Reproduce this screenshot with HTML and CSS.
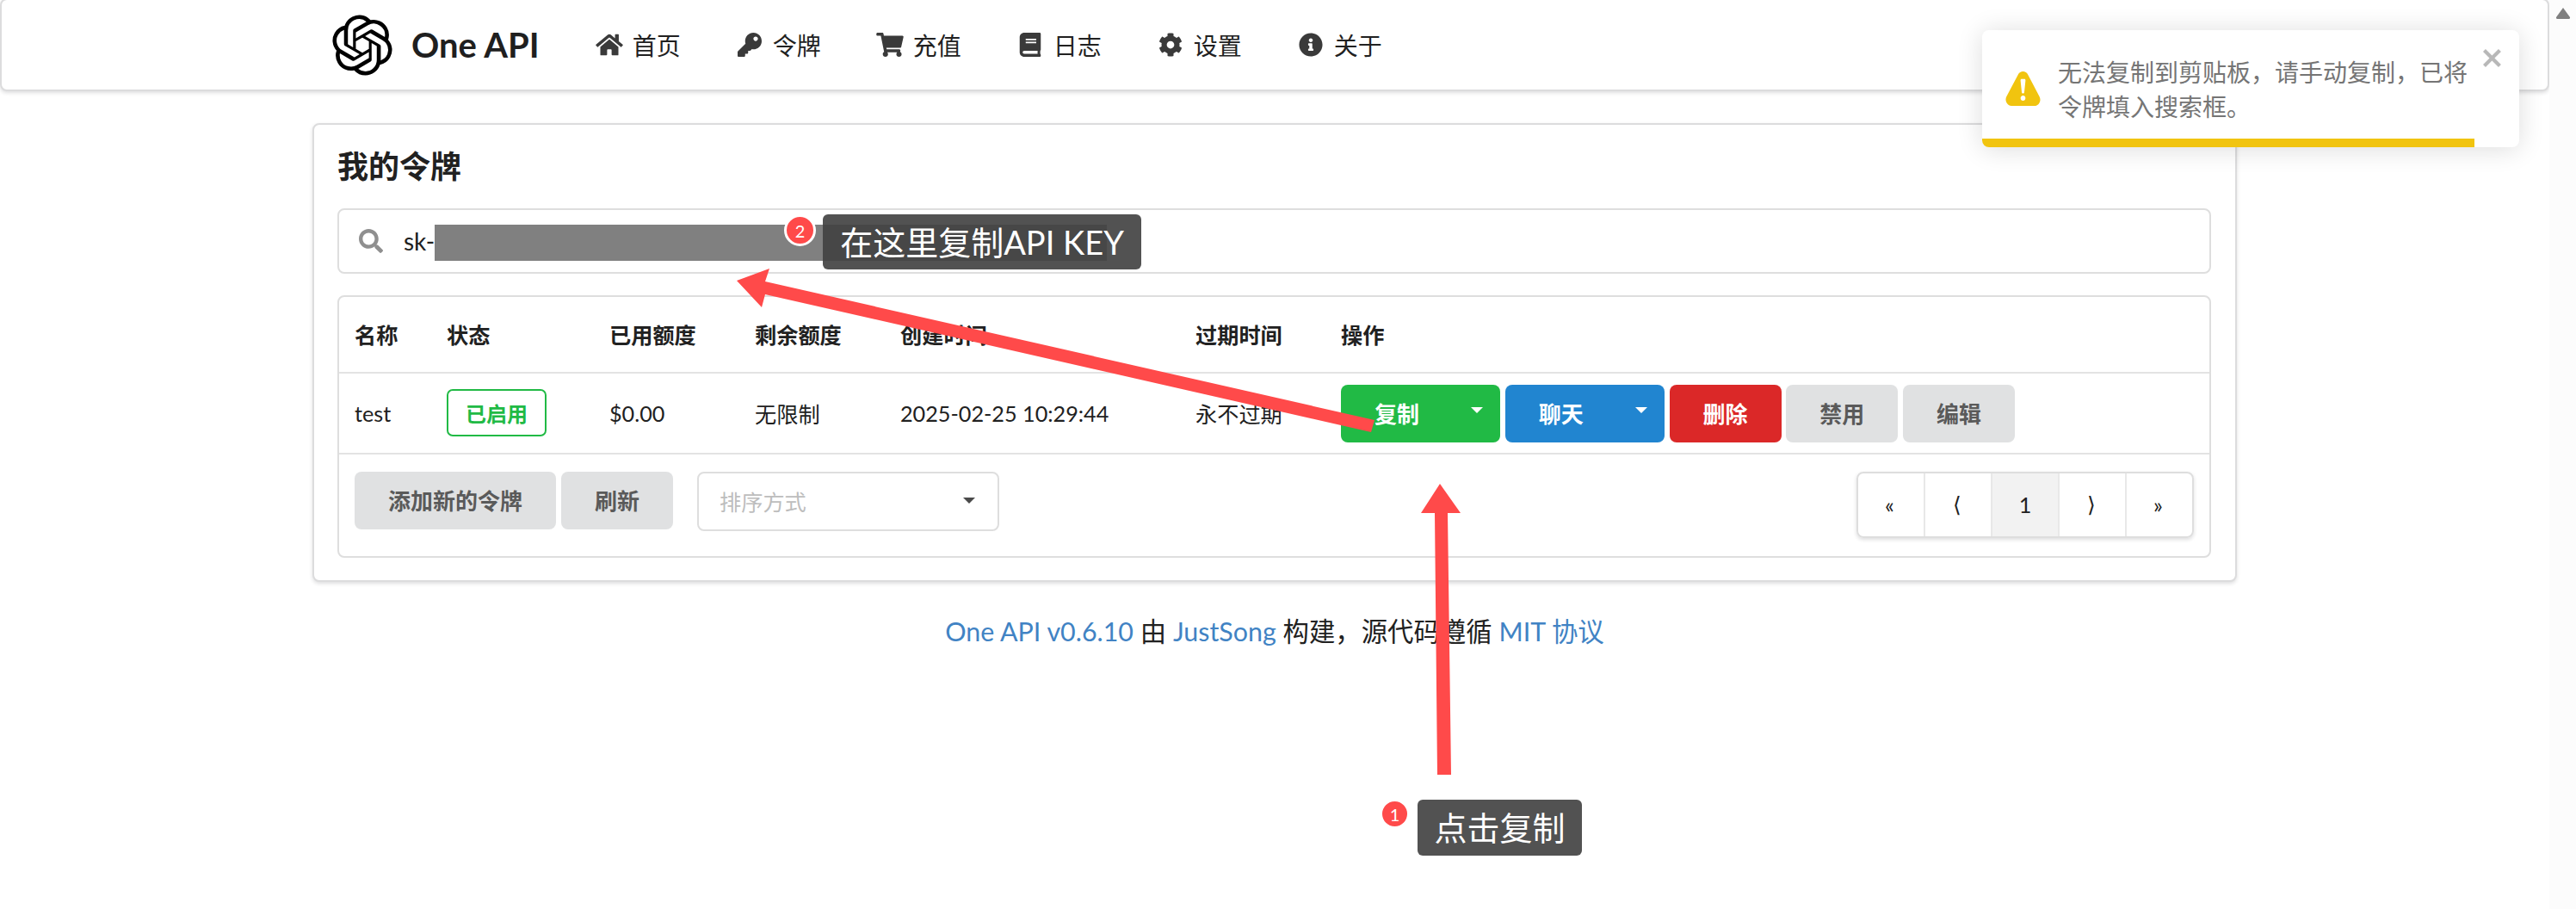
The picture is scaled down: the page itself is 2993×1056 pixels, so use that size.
FILE: index.html
```html
<!DOCTYPE html>
<html lang="zh">
<head>
<meta charset="utf-8">
<title>One API</title>
<link rel="stylesheet" href="styles.css">
</head>
<body>
<div class="page">
  <div class="content">
    <header class="navbar">
      <div class="nav-inner">
        <a class="brand">
          <svg class="logo" viewBox="0 0 24 24"><path d="M22.2819 9.8211a5.9847 5.9847 0 0 0-.5157-4.9108 6.0462 6.0462 0 0 0-6.5098-2.9A6.0651 6.0651 0 0 0 4.9807 4.1818a5.9847 5.9847 0 0 0-3.9977 2.9 6.0462 6.0462 0 0 0 .7427 7.0966 5.98 5.98 0 0 0 .511 4.9107 6.051 6.051 0 0 0 6.5146 2.9001A5.9847 5.9847 0 0 0 13.2599 24a6.0557 6.0557 0 0 0 5.7718-4.2058 5.9894 5.9894 0 0 0 3.9977-2.9001 6.0557 6.0557 0 0 0-.7475-7.0729zm-9.022 12.6081a4.4755 4.4755 0 0 1-2.8764-1.0408l.1419-.0804 4.7783-2.7582a.7948.7948 0 0 0 .3927-.6813v-6.7369l2.02 1.1686a.071.071 0 0 1 .038.052v5.5826a4.504 4.504 0 0 1-4.4945 4.4944zm-9.6607-4.1254a4.4708 4.4708 0 0 1-.5346-3.0137l.142.0852 4.783 2.7582a.7712.7712 0 0 0 .7806 0l5.8428-3.3685v2.3324a.0804.0804 0 0 1-.0332.0615L9.74 19.9502a4.4992 4.4992 0 0 1-6.1408-1.6464zM2.3408 7.8956a4.485 4.485 0 0 1 2.3655-1.9728V11.6a.7664.7664 0 0 0 .3879.6765l5.8144 3.3543-2.0201 1.1685a.0757.0757 0 0 1-.071 0l-4.8303-2.7865A4.504 4.504 0 0 1 2.3408 7.872zm16.5963 3.8558L13.1038 8.364 15.1192 7.2a.0757.0757 0 0 1 .071 0l4.8303 2.7913a4.4944 4.4944 0 0 1-.6765 8.1042v-5.6772a.79.79 0 0 0-.407-.667zm2.0107-3.0231l-.142-.0852-4.7735-2.7818a.7759.7759 0 0 0-.7854 0L9.409 9.2297V6.8974a.0662.0662 0 0 1 .0284-.0615l4.8303-2.7866a4.4992 4.4992 0 0 1 6.6802 4.66zM8.3065 12.863l-2.02-1.1638a.0804.0804 0 0 1-.038-.0567V6.0742a4.4992 4.4992 0 0 1 7.3757-3.4537l-.142.0805L8.704 5.459a.7948.7948 0 0 0-.3927.6813zm1.0976-2.3654l2.602-1.4998 2.6069 1.4998v2.9994l-2.5974 1.4997-2.6067-1.4997Z"/></svg>
          <span class="brand-name">One API</span>
        </a>
        <nav class="menu">
          <a class="menu-item"><svg class="nav-icon" viewBox="0 0 576 512"><path d="M280.37 148.26L96 300.11V464a16 16 0 0 0 16 16l112.06-.29a16 16 0 0 0 15.92-16V368a16 16 0 0 1 16-16h64a16 16 0 0 1 16 16v95.64a16 16 0 0 0 16 16.05L464 480a16 16 0 0 0 16-16V300L295.67 148.26a12.19 12.19 0 0 0-15.3 0zM571.6 251.47L488 182.56V44.05a12 12 0 0 0-12-12h-56a12 12 0 0 0-12 12v72.61L318.47 43a48 48 0 0 0-61 0L4.34 251.47a12 12 0 0 0-1.6 16.9l25.5 31A12 12 0 0 0 45.15 301l235.22-193.74a12.19 12.19 0 0 1 15.3 0L530.9 301a12 12 0 0 0 16.9-1.6l25.5-31a12 12 0 0 0-1.7-16.93z"/></svg>首页</a>
          <a class="menu-item"><svg class="nav-icon" viewBox="0 0 512 512"><path d="M512 176.001C512 273.203 433.202 352 336 352c-11.22 0-22.19-1.062-32.827-3.069l-24.012 27.014A23.999 23.999 0 0 1 261.223 384H224v40c0 13.255-10.745 24-24 24h-40v40c0 13.255-10.745 24-24 24H24c-13.255 0-24-10.745-24-24v-78.059c0-6.365 2.529-12.47 7.029-16.971l161.802-161.802C163.108 213.814 160 195.271 160 176 160 78.798 238.797.001 335.999 0 433.488-.001 512 78.511 512 176.001zM336 128c0 26.51 21.49 48 48 48s48-21.49 48-48-21.49-48-48-48-48 21.49-48 48z"/></svg>令牌</a>
          <a class="menu-item"><svg class="nav-icon" viewBox="0 0 576 512"><path d="M528.12 301.319l47.273-208C578.806 78.301 567.391 64 551.99 64H159.208l-9.166-44.81C147.758 8.021 137.93 0 126.529 0H24C10.745 0 0 10.745 0 24v16c0 13.255 10.745 24 24 24h69.883l70.248 343.435C147.325 417.1 136 435.222 136 456c0 30.928 25.072 56 56 56s56-25.072 56-56c0-15.674-6.447-29.835-16.824-40h209.647C430.447 426.165 424 440.326 424 456c0 30.928 25.072 56 56 56s56-25.072 56-56c0-22.172-12.888-41.332-31.579-50.405l5.517-24.276c3.413-15.018-8.002-29.319-23.403-29.319H218.117l-6.545-32h293.145c11.206 0 20.92-7.754 23.403-18.681z"/></svg>充值</a>
          <a class="menu-item"><svg class="nav-icon" viewBox="0 0 448 512"><path d="M448 360V24c0-13.3-10.7-24-24-24H96C43 0 0 43 0 96v320c0 53 43 96 96 96h328c13.3 0 24-10.7 24-24v-16c0-7.5-3.5-14.3-8.9-18.7-4.2-15.4-4.2-59.3 0-74.7 5.4-4.3 8.9-11.1 8.9-18.6zM128 134c0-3.3 2.7-6 6-6h212c3.3 0 6 2.7 6 6v20c0 3.3-2.7 6-6 6H134c-3.3 0-6-2.7-6-6v-20zm0 64c0-3.3 2.7-6 6-6h212c3.3 0 6 2.7 6 6v20c0 3.3-2.7 6-6 6H134c-3.3 0-6-2.7-6-6v-20zm253.4 250H96c-17.7 0-32-14.3-32-32 0-17.6 14.4-32 32-32h285.4c-1.9 17.1-1.9 46.9 0 64z"/></svg>日志</a>
          <a class="menu-item"><svg class="nav-icon" viewBox="0 0 512 512"><path d="M487.4 315.7l-42.6-24.6c4.3-23.2 4.3-47 0-70.2l42.6-24.6c4.9-2.8 7.1-8.6 5.5-14-11.1-35.6-30-67.8-54.7-94.6-3.8-4.1-10-5.1-14.8-2.3L380.8 110c-17.9-15.4-38.5-27.3-60.8-35.1V25.8c0-5.6-3.9-10.5-9.4-11.7-36.7-8.2-74.3-7.8-109.2 0-5.5 1.2-9.4 6.1-9.4 11.7V75c-22.2 7.9-42.8 19.8-60.8 35.1L88.7 85.5c-4.9-2.8-11-1.9-14.8 2.3-24.7 26.7-43.6 58.9-54.7 94.6-1.7 5.4.6 11.2 5.5 14L67.3 221c-4.3 23.2-4.3 47 0 70.2l-42.6 24.6c-4.9 2.8-7.1 8.6-5.5 14 11.1 35.6 30 67.8 54.7 94.6 3.8 4.1 10 5.1 14.8 2.3l42.6-24.6c17.9 15.4 38.5 27.3 60.8 35.1v49.2c0 5.6 3.9 10.5 9.4 11.7 36.7 8.2 74.3 7.8 109.2 0 5.5-1.2 9.4-6.1 9.4-11.7v-49.2c22.2-7.9 42.8-19.8 60.8-35.1l42.6 24.6c4.9 2.8 11 1.9 14.8-2.3 24.7-26.7 43.6-58.9 54.7-94.6 1.5-5.5-.7-11.3-5.6-14.1zM256 336c-44.1 0-80-35.9-80-80s35.9-80 80-80 80 35.9 80 80-35.9 80-80 80z"/></svg>设置</a>
          <a class="menu-item"><svg class="nav-icon" viewBox="0 0 512 512"><path d="M256 8C119.043 8 8 119.083 8 256c0 136.997 111.043 248 248 248s248-111.003 248-248C504 119.083 392.957 8 256 8zm0 110c23.196 0 42 18.804 42 42s-18.804 42-42 42-42-18.804-42-42 18.804-42 42-42zm56 254c0 6.627-5.373 12-12 12h-88c-6.627 0-12-5.373-12-12v-24c0-6.627 5.373-12 12-12h12v-64h-12c-6.627 0-12-5.373-12-12v-24c0-6.627 5.373-12 12-12h64c6.627 0 12 5.373 12 12v100h12c6.627 0 12 5.373 12 12v24z"/></svg>关于</a>
        </nav>
      </div>
    </header>

    <main class="card">
      <h1 class="card-title">我的令牌</h1>
      <div class="search">
        <svg class="search-icon" viewBox="0 0 512 512"><path d="M505 442.7L405.3 343c-4.5-4.5-10.6-7-17-7H372c27.6-35.3 44-79.7 44-128C416 93.1 322.9 0 208 0S0 93.1 0 208s93.1 208 208 208c48.3 0 92.7-16.4 128-44v16.3c0 6.4 2.5 12.5 7 17l99.7 99.7c9.4 9.4 24.6 9.4 33.9 0l28.3-28.3c9.4-9.4 9.4-24.6.1-34zM208 336c-70.7 0-128-57.2-128-128 0-70.7 57.2-128 128-128 70.7 0 128 57.2 128 128 0 70.7-57.2 128-128 128z"/></svg>
        <span class="search-text">sk-</span>
        <span class="redaction"></span>
      </div>

      <table class="tokens">
        <thead>
          <tr>
            <th class="col-name">名称</th>
            <th class="col-status">状态</th>
            <th class="col-quota">已用额度</th>
            <th class="col-quota">剩余额度</th>
            <th class="col-created">创建时间</th>
            <th class="col-quota">过期时间</th>
            <th>操作</th>
          </tr>
        </thead>
        <tbody>
          <tr>
            <td>test</td>
            <td><span class="status-label">已启用</span></td>
            <td>$0.00</td>
            <td>无限制</td>
            <td>2025-02-25 10:29:44</td>
            <td>永不过期</td>
            <td>
              <div class="actions">
                <button class="btn btn-split btn-green">复制<i class="caret"></i></button>
                <button class="btn btn-split btn-blue">聊天<i class="caret"></i></button>
                <button class="btn btn-red">删除</button>
                <button class="btn btn-grey">禁用</button>
                <button class="btn btn-grey">编辑</button>
              </div>
            </td>
          </tr>
        </tbody>
        <tfoot>
          <tr>
            <td colspan="7" class="foot-cell">
              <div class="foot">
                <button class="btn btn-grey">添加新的令牌</button>
                <button class="btn btn-grey">刷新</button>
                <div class="select"><span>排序方式</span><i class="caret caret-dark"></i></div>
                <div class="pagination">
                  <a class="page-cell">«</a>
                  <a class="page-cell">⟨</a>
                  <a class="page-cell page-active">1</a>
                  <a class="page-cell">⟩</a>
                  <a class="page-cell">»</a>
                </div>
              </div>
            </td>
          </tr>
        </tfoot>
      </table>
    </main>

    <footer class="site-foot">
      <a>One API v0.6.10</a> 由 <a>JustSong</a> 构建，源代码遵循 <a>MIT 协议</a>
    </footer>
  </div>
  <aside class="scrollbar"><svg class="scroll-arrow" viewBox="0 0 18 14"><path d="M9 1 L17 12 Q17.5 14 15 14 H3 Q.5 14 1 12 Z"/></svg></aside>
</div>

<div class="toast">
  <svg class="toast-icon" viewBox="0 0 24 24"><path d="M23.32 17.191L15.438 2.184C14.728.833 13.416 0 11.996 0c-1.42 0-2.733.833-3.443 2.184L.533 17.448a4.744 4.744 0 000 4.368C1.243 23.167 2.555 24 3.975 24h16.05C22.22 24 24 22.044 24 19.632c0-.904-.251-1.746-.68-2.44zm-9.622 1.46c0 1.033-.724 1.823-1.698 1.823s-1.698-.79-1.698-1.822v-.043c0-1.028.724-1.822 1.698-1.822s1.698.79 1.698 1.822v.043zm.039-12.285l-.84 8.06c-.057.581-.408.943-.897.943-.49 0-.84-.367-.896-.942l-.84-8.065c-.057-.624.25-1.095.779-1.095h1.91c.528.005.84.476.784 1.1z"/></svg>
  <p class="toast-text">无法复制到剪贴板，请手动复制，已将令牌填入搜索框。</p>
  <svg class="toast-close" viewBox="0 0 14 16"><path d="M7.71 8.23l3.75 3.75-1.48 1.48-3.75-3.75-3.75 3.75L1 11.98l3.75-3.75L1 4.48 2.48 3l3.75 3.75L9.98 3l1.48 1.48-3.75 3.75z"/></svg>
  <div class="toast-progress"></div>
</div>

<svg class="arrows" viewBox="0 0 2993 1056">
  <polygon points="856,326 894,312 889,327 1597,488 1593,502 889,342 885,357"/>
  <polygon points="1673,562 1697,596 1682,596 1686,900 1670,900 1667,596 1651,596"/>
</svg>
<span class="badge badge-two">2</span>
<span class="note note-two">在这里复制API KEY</span>
<span class="badge badge-one">1</span>
<span class="note note-one">点击复制</span>
</body>
</html>
```
FILE: styles.css
```css
* { box-sizing: border-box; }
html, body { margin: 0; padding: 0; }
body {
  position: relative;
  width: 2993px;
  height: 1056px;
  overflow: hidden;
  background: #fff;
  color: #212121;
  font-family: Lato, "Noto Sans CJK SC", "Liberation Sans", sans-serif;
  font-size: 28px;
}
.page { display: flex; height: 1056px; }
.content { flex: 1; min-width: 0; }
.scrollbar { width: 31px; flex: none; background: #fcfcfc; padding: 8px 0 0 7px; }
.scroll-arrow { display: block; width: 18px; height: 14px; fill: #808080; }

.navbar {
  margin-top: -2px;
  height: 108px;
  background: #fff;
  border: 2px solid #dcdcdd;
  border-radius: 8px;
  box-shadow: 0 2px 4px rgba(34, 36, 38, .15);
}
.nav-inner { width: 2236px; margin: 0 auto; padding-left: 23px; height: 100%; display: flex; align-items: center; }
.brand { display: flex; align-items: center; gap: 22px; }
.logo { width: 70px; height: 71px; display: block; fill: #000; }
.brand-name { font-size: 40px; font-weight: 700; color: #1f1f1f; line-height: 1; }
.menu { display: flex; margin-left: 33px; }
.menu-item { display: flex; align-items: center; padding: 0 32px; font-size: 28px; white-space: nowrap; color: #212121; height: 50px; }
.nav-icon { width: 32px; height: 28px; margin-right: 11px; fill: #3a3a3a; flex: none; }

.card {
  width: 2236px;
  height: 533px;
  margin: 37px auto 0;
  padding: 26px 28px 0 27px;
  background: #fff;
  border: 2px solid #dcdcdd;
  border-radius: 8px;
  box-shadow: 0 2px 4px rgba(34, 36, 38, .15);
}
.card-title { margin: 0 0 27px; font-size: 36px; line-height: 44px; font-weight: 700; }

.search {
  height: 76px;
  display: flex;
  align-items: center;
  padding-left: 23px;
  border: 2px solid #dedede;
  border-radius: 8px;
}
.search-icon { width: 28px; height: 28px; fill: #8f8f8f; flex: none; margin-right: 24px; }
.search-text { font-size: 28px; line-height: 42px; }
.redaction { width: 781px; height: 42px; margin-top: 4px; background: #808080; }

.tokens {
  width: 100%;
  margin-top: 25px;
  border: 2px solid #dedede;
  border-radius: 8px;
  border-spacing: 0;
  border-collapse: separate;
  table-layout: fixed;
  font-size: 25.2px;
}
.tokens th {
  height: 89px;
  padding: 0 18px 2px;
  text-align: left;
  font-weight: 700;
  border-bottom: 2px solid #e3e3e3;
}
.tokens tbody td {
  height: 94px;
  padding: 0 18px;
  border-bottom: 2px solid #e3e3e3;
  white-space: nowrap;
}
.tokens tbody td:last-child { padding-right: 0; }
.col-name { width: 107px; }
.col-status { width: 189px; }
.col-quota { width: 169px; }
.col-created { width: 343px; }

.status-label {
  display: inline-flex;
  align-items: center;
  justify-content: center;
  width: 116px;
  height: 55px;
  margin-bottom: 2px;
  border: 2px solid #21ba45;
  border-radius: 7px;
  color: #21ba45;
  font-size: 24px;
  font-weight: 700;
}

.actions { display: flex; gap: 5.75px; }
.btn {
  height: 67px;
  padding: 0 39px 2px;
  border: 0;
  border-radius: 8px;
  font: 700 26px Lato, "Noto Sans CJK SC", sans-serif;
  white-space: nowrap;
}
.btn-split { width: 185px; display: flex; align-items: center; justify-content: space-between; padding-right: 20px; }
.btn-green { background: #21ba45; color: #fff; }
.btn-blue { background: #2185d0; color: #fff; }
.btn-red { background: #db2828; color: #fff; }
.btn-grey { background: #e0e1e2; color: #5a5a5a; }
.caret {
  width: 0;
  height: 0;
  border-left: 7px solid transparent;
  border-right: 7px solid transparent;
  border-top: 7px solid #fff;
  margin-top: -6px;
}
.caret-dark { border-top-color: #4a4a4a; margin: 0; }

.foot-cell { padding: 0; }
.foot { display: flex; align-items: flex-start; gap: 6px; height: 118px; padding: 20px 18px 0; }
.select {
  width: 351px;
  height: 69px;
  margin-left: 22px;
  padding: 0 26px 2px 24px;
  display: flex;
  align-items: center;
  justify-content: space-between;
  border: 2px solid #dedede;
  border-radius: 8px;
  font-size: 25.2px;
  color: #bdbdbd;
}
.pagination {
  display: flex;
  margin-left: auto;
  height: 77px;
  border: 2px solid #dedede;
  border-radius: 8px;
  box-shadow: 0 2px 4px rgba(34, 36, 38, .15);
  font-size: 25.2px;
  overflow: hidden;
}
.page-cell {
  width: 78px;
  display: flex;
  align-items: center;
  justify-content: center;
  padding: 0 3px 2px 0;
  border-left: 2px solid #e8e8e8;
  color: #212121;
}
.page-cell:first-child { border-left: 0; width: 76px; }
.page-active { background: #f2f2f2; padding-right: 0; }

.site-foot { margin-top: 37px; text-align: center; font-size: 30.4px; line-height: 40px; color: #212121; }
.site-foot a { color: #4183c4; }

.toast {
  position: absolute;
  left: 2303px;
  top: 35px;
  width: 624px;
  height: 136px;
  padding: 28px 42px 0 27px;
  display: flex;
  gap: 20px;
  background: #fff;
  border-radius: 8px;
  box-shadow: 0 2px 30px rgba(0, 0, 0, .14);
  overflow: hidden;
}
.toast-icon { width: 41px; height: 40px; margin-top: 20px; fill: #f1c40f; flex: none; }
.toast-text { margin: 0; font-size: 28px; line-height: 40px; color: #757575; font-family: "Noto Sans CJK SC", sans-serif; width: 520px; }
.toast-close { position: absolute; right: 16px; top: 16px; width: 28px; height: 32px; fill: #b8b8b8; }
.toast-progress { position: absolute; left: 0; bottom: 0; width: 572px; height: 10px; background: #f1c40f; }

.arrows { position: absolute; left: 0; top: 0; width: 2993px; height: 1056px; fill: #ff4a4a; pointer-events: none; }
.badge {
  position: absolute;
  display: flex;
  align-items: center;
  justify-content: center;
  background: #ff4a4a;
  border: 3px solid #fff;
  border-radius: 50%;
  color: #fff;
  font-size: 20px;
  line-height: 1;
}
.badge-two { left: 911px; top: 249px; width: 37px; height: 37px; }
.badge-one { left: 1603px; top: 928px; width: 35px; height: 35px; }
.note {
  position: absolute;
  display: flex;
  align-items: center;
  justify-content: center;
  padding-bottom: 4px;
  background: rgba(65, 65, 65, .91);
  border-radius: 6px;
  color: #fff;
  font-size: 38px;
  white-space: nowrap;
}
.note-two { left: 956px; top: 249px; width: 370px; height: 64px; }
.note-one { left: 1647px; top: 929px; width: 191px; height: 65px; }
```
